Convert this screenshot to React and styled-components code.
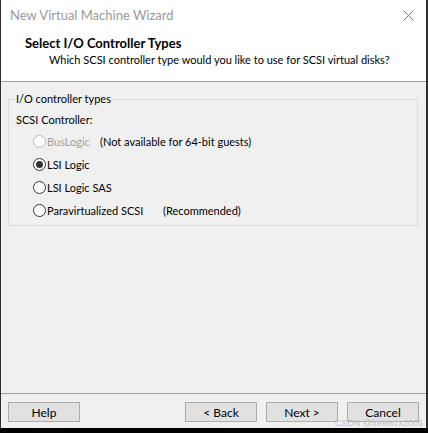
import React from "react";
import styled, { createGlobalStyle } from "styled-components";

const Global = createGlobalStyle`
  html, body { margin: 0; padding: 0; background: #000; }
  body { font-family: Lato, "Noto Sans", "Liberation Sans", sans-serif; font-size: 11px; color: #000; }
  * { box-sizing: border-box; }
`;

const Window = styled.div`
  width: 428px;
  height: 428px;
  background: #f0f0f0;
  border-left: 1px solid #2e2e2e;
  border-right: 2px solid #2e2e2e;
  display: flex;
  flex-direction: column;
  position: relative;
  white-space: nowrap;
`;

const TitleBar = styled.div`
  height: 30px;
  background: #fff;
  display: flex;
  align-items: center;
  justify-content: space-between;
  padding: 0 12px 0 9px;
  color: #9a9a9a;
  font-size: 13px;
`;

const CloseIcon = styled.svg`
  width: 11px;
  height: 11px;
`;

const Header = styled.div`
  height: 52px;
  background: #fff;
  border-bottom: 1px solid #a0a0a0;
  padding: 5px 0 0 24px;
  display: flex;
  flex-direction: column;
`;

const HeaderTitle = styled.div`
  font-weight: 700;
  font-size: 13px;
  line-height: 17px;
`;

const HeaderSub = styled.div`
  padding-left: 24px;
  line-height: 16px;
`;

const Content = styled.div`
  flex: 1;
  padding: 9px 8px 0 7px;
`;

const Group = styled.fieldset`
  margin: 0;
  border: 1px solid #dcdcdc;
  padding: 0 0 3px 7px;
  min-width: 0;
`;

const Legend = styled.legend`
  padding: 0 1px;
  margin-left: -1px;
  line-height: 16px;
`;

const Label = styled.div`
  height: 22px;
  display: flex;
  align-items: center;
  margin-top: 1px;
`;

const Row = styled.div`
  height: 23px;
  display: flex;
  align-items: center;
  padding-left: 17px;
  color: ${(p) => (p.disabled ? "#a0a0a0" : "#000")};
`;

const Radio = styled.span`
  width: 13px;
  height: 13px;
  border-radius: 50%;
  border: 1px solid ${(p) => (p.disabled ? "#bcbcbc" : "#333")};
  background: #fff;
  display: inline-flex;
  align-items: center;
  justify-content: center;
  margin-right: 1px;
  flex: none;
  &::after {
    content: "";
    width: 7px;
    height: 7px;
    border-radius: 50%;
    background: ${(p) => (p.checked ? "#333" : "transparent")};
  }
`;

const RadioText = styled.span`
  width: ${(p) => (p.w ? `${p.w}px` : "auto")};
  flex: none;
`;

const Note = styled.span`
  color: #000;
`;

const Footer = styled.div`
  border-top: 1px solid #a0a0a0;
  height: 35px;
  display: flex;
  align-items: flex-start;
  padding: 8px 7px 0 7px;
  gap: 9px;
`;

const Button = styled.button`
  width: 72px;
  height: 20px;
  background: #e1e1e1;
  border: 1px solid #adadad;
  font-family: inherit;
  font-size: 12px;
  color: #000;
  padding: 0;
  margin-left: ${(p) => p.ml || 0}px;
`;

const Watermark = styled.div`
  position: absolute;
  right: 3px;
  bottom: 0;
  font-size: 9px;
  line-height: 9px;
  color: rgba(180, 180, 180, 0.85);
  font-family: "Liberation Sans", sans-serif;
`;

const Bottom = styled.div`
  height: 5px;
  background: #000;
`;

export default function App() {
  const options = [
    { label: "BusLogic", w: 53, note: "(Not available for 64-bit guests)", disabled: true },
    { label: "LSI Logic", checked: true },
    { label: "LSI Logic SAS" },
    { label: "Paravirtualized SCSI", w: 116, note: "(Recommended)" },
  ];
  return (
    <>
      <Global />
      <Window>
        <TitleBar>
          <span>New Virtual Machine Wizard</span>
          <CloseIcon viewBox="0 0 11 11">
            <path d="M0.5 0.5 L10.5 10.5 M10.5 0.5 L0.5 10.5" stroke="#7a7a7a" strokeWidth="1" fill="none" />
          </CloseIcon>
        </TitleBar>
        <Header>
          <HeaderTitle>Select I/O Controller Types</HeaderTitle>
          <HeaderSub>Which SCSI controller type would you like to use for SCSI virtual disks?</HeaderSub>
        </Header>
        <Content>
          <Group>
            <Legend>I/O controller types</Legend>
            <Label>SCSI Controller:</Label>
            {options.map((o) => (
              <Row key={o.label} disabled={o.disabled}>
                <Radio checked={o.checked} disabled={o.disabled} />
                <RadioText w={o.w}>{o.label}</RadioText>
                {o.note && <Note>{o.note}</Note>}
              </Row>
            ))}
          </Group>
        </Content>
        <Footer>
          <Button>Help</Button>
          <Button ml={96}>&lt; Back</Button>
          <Button>Next &gt;</Button>
          <Button>Cancel</Button>
        </Footer>
        <Watermark>CSDN @freewzx2005</Watermark>
      </Window>
      <Bottom />
    </>
  );
}
